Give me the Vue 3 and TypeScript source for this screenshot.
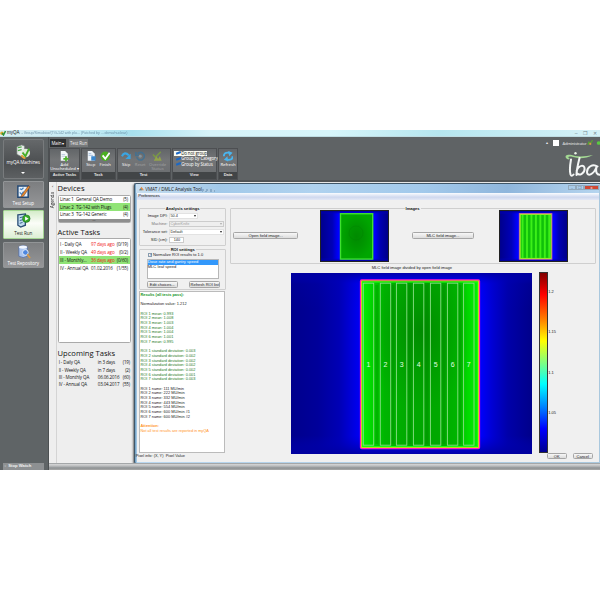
<script setup lang="ts">
interface Task { name: string; when: string; count: string; late?: boolean; active?: boolean }

const devices = [
  { name: 'Linac 1  General QA Demo', count: '(5)', active: false },
  { name: 'Linac 2  TG-142 with Plugs', count: '(4)', active: true },
  { name: 'Linac 3  TG-142 Generic', count: '(4)', active: false },
]
const activeTasks: Task[] = [
  { name: 'I - Daily QA', when: '97 days ago', count: '(0/19)', late: true },
  { name: 'II - Weekly QA', when: '49 days ago', count: '(0/2)', late: true },
  { name: 'III - Monthly...', when: '36 days ago', count: '(0/60)', late: true, active: true },
  { name: 'IV - Annual QA', when: '01.02.2016', count: '(1/55)' },
]
const upcoming: Task[] = [
  { name: 'I - Daily QA', when: 'in 3 days', count: '(19)' },
  { name: 'II - Weekly QA', when: 'in 7 days', count: '(2)' },
  { name: 'III - Monthly QA', when: '06.06.2016', count: '(60)' },
  { name: 'IV - Annual QA', when: '03.04.2017', count: '(55)' },
]
const means = ['0.993', '1.008', '1.003', '1.004', '1.004', '1.001', '0.995']
const deviations = ['0.003', '0.002', '0.002', '0.002', '0.002', '0.001', '0.003']
const names = ['111 MU/min', '222 MU/min', '332 MU/min', '443 MU/min', '554 MU/min', '600 MU/min #1', '600 MU/min #2']
const roiX = [72.3, 89.3, 105.4, 122.4, 139.4, 156.4, 172.6]
const stripes = [0, 1, 2, 3, 4, 5, 6]
const ticks = ['1.2', '1.15', '1.1', '1.05']
</script>

<template>
  <div class="page">
    <div class="shot">
      <header class="titlebar">
        <svg class="appicon" viewBox="0 0 6 6"><circle cx="2" cy="3.2" r="1.8" fill="#e0a928" /><path d="M2 3l1.5 2L5.5 1" fill="none" stroke="#2b9340" stroke-width="1.5" /></svg>
        <span class="apptitle">myQA</span>
        <span class="appghost">- Group/Simulator/(TG-142 with plu... (Patched by ... demo/nuclear)</span>
        <span class="wincontrols">–&nbsp; ❐&nbsp; ✕</span>
      </header>

      <div class="shell">
        <aside class="sidebar">
          <div class="nav machines">
            <svg viewBox="0 0 16 16"><path d="M1 3l5-2 3 1v10l-4 1-4-2z" fill="#e8edea" stroke="#7d8d82" stroke-width=".7" /><path d="M2 4l4-1M2 7l4-1" stroke="#47a743" stroke-width="1.3" /><circle cx="10.5" cy="9.5" r="4.5" fill="#dfe8d8" /><path d="M7 9l3 4 4-8" fill="none" stroke="#42ab27" stroke-width="2" /><path d="M6 12q1 3 4 3" stroke="#e7a336" stroke-width="2" fill="none" /></svg>
            <span>myQA Machines</span>
            <i class="arrow"></i>
          </div>
          <div class="nav setup">
            <svg viewBox="0 0 16 16"><path d="M2 2h11v12H2z" fill="#e8f2fb" stroke="#244974" stroke-width="1.6" /><path d="M4 5l2 1 2-2M4 9l2 2 2-3" fill="none" stroke="#397dc0" stroke-width="1.2" /><path d="M6 12l7-10 2 1-7 10-3 1z" fill="#e98a2c" stroke="#65412e" stroke-width=".6" /></svg>
            <span>Test Setup</span>
          </div>
          <div class="nav run">
            <svg viewBox="0 0 16 16"><path d="M2 2l8-1v12l-5 2-3-2z" fill="#bfdbee" stroke="#2a4d74" stroke-width="1.4" /><path d="M4 5l4-1M4 8l4-1M4 11l3-1" stroke="#335e8a" stroke-width="1" /><circle cx="11" cy="6" r="4" fill="#38ac28" stroke="#166a20" stroke-width=".6" /><path d="M9.7 3.8L13.4 6 9.7 8.2z" fill="#fff" /></svg>
            <span>Test Run</span>
          </div>
          <div class="nav repo">
            <svg viewBox="0 0 16 16"><path d="M3 3q5-3 9 0v10q-4 3-9 0z" fill="#a9c4ef" stroke="#5069a0" stroke-width=".8" /><ellipse cx="7.5" cy="3.3" rx="4.4" ry="1.7" fill="#f2f7ff" /><circle cx="10" cy="9" r="3" fill="#4d86de" stroke="#e6effa" /><path d="M12 11l3 4" stroke="#db9a43" stroke-width="1.8" /></svg>
            <span>Test Repository</span>
          </div>
          <div class="stopwatch">▫ &nbsp;Stop Watch</div>
        </aside>

        <div class="right">
          <div class="top">
            <div class="ribbon">
              <div class="tabs"><span class="tab on">Main ▾</span><span class="tab">Test Run</span></div>
              <div class="groups">
                <section class="group g1">
                  <div class="tools"><div class="tool">
                    <svg viewBox="0 0 12 12"><path d="M2 0h5l3 3v8H2z" fill="#f4f7fb" /><path d="M3 4h4M3 6h4" stroke="#9eb4cf" stroke-width=".7" /><path d="M8 6v6M5 9h6" stroke="#4fb32c" stroke-width="2" /></svg>
                    <span>Add<br>Unscheduled ▾</span></div></div>
                  <footer>Active Tasks</footer>
                </section>
                <section class="group g2">
                  <div class="tools">
                    <div class="tool"><svg viewBox="0 0 12 12"><path d="M2 0h5l3 3v8H2z" fill="#eff5fb" /><path d="M3 3h3M3 5h5" stroke="#8aabd0" stroke-width=".8" /><path d="M6 6h5v5H6z" fill="#3986cd" /></svg><span>Stop</span></div>
                    <div class="tool"><svg viewBox="0 0 12 12"><circle cx="6" cy="6" r="5.3" fill="#4caf22" /><path d="M3 5l3 4 5-7" fill="none" stroke="#fff" stroke-width="2" /></svg><span>Finish</span></div>
                  </div>
                  <footer>Task</footer>
                </section>
                <section class="group g3">
                  <div class="tools">
                    <div class="tool"><svg viewBox="0 0 12 12"><path d="M1 6Q4 0 9 5" fill="none" stroke="#3aa5e2" stroke-width="2.4" /><path d="M11 3v6H5z" fill="#3aa5e2" /></svg><span>Skip</span></div>
                    <div class="tool dim"><svg viewBox="0 0 12 12"><path d="M3 3a4.4 4.4 0 1 1-1 4M1 1v4h4" fill="none" stroke="#3d7196" stroke-width="1.8" /><circle cx="6" cy="6" r="1.7" fill="#8f9ba4" /></svg><span>Reset</span></div>
                    <div class="tool dim"><svg viewBox="0 0 12 12"><path d="M1 4l3 3 6-6" fill="none" stroke="#7ca13c" stroke-width="1.7" /><path d="M2 11l3-5 2 3 2-3 2 5z" fill="#9baf3f" /></svg><span>Override<br>Status</span></div>
                  </div>
                  <footer>Test</footer>
                </section>
                <section class="group g4">
                  <div class="viewlist">
                    <div class="sel"><i></i>Do not group</div>
                    <div><i></i>Group by Category</div>
                    <div><i></i>Group by Status</div>
                  </div>
                  <footer>View</footer>
                </section>
                <section class="group g5">
                  <div class="tools"><div class="tool"><svg viewBox="0 0 12 12"><path d="M1 6q0-5 6-4M11 6q0 5-6 4" fill="none" stroke="#49b5ef" stroke-width="2.2" /><path d="M6 0l5 2-4 4zM6 12L1 10l4-4z" fill="#49b5ef" /></svg><span>Refresh</span></div></div>
                  <footer>Data</footer>
                </section>
              </div>
            </div>
            <div class="brand">
              <div class="user"><span>▴</span><i></i><b>Administrator</b><svg viewBox="0 0 14 6"><path d="M1 5l1-3 2 1 2-3" stroke="#58a334" stroke-width="1.4" fill="none" /><circle cx="3.5" cy="4" r="1.2" fill="#d39744" /><circle cx="12.5" cy="3" r="2" fill="#5cc942" /></svg></div>
              <svg class="iba" viewBox="0 0 40 28">
                <path d="M5 7C3 3 9 3 14 5c7 1 12 0 18-1-7 3.5-14 4-20 2C7 5 6 6 9 8 7 9 6 8 5 7z" fill="#a3d893" />
                <circle cx="14.5" cy="2.2" r="1.2" fill="#e9f5e5" />
                <path d="M10 8.5C9 14 8.5 20 9.5 23.5q1 2.5 3 0M18.500 7c-1.500 6-3 12-3 17M15.600 20c2-6 8-7 8-2 0 4-5 7.500-8 4M36.500 15.500c-5-3.500-10.500 1-10.500 5.500 0 5 6.500 3 9.500-5-1 5 0 8.500 4.500 7.500" fill="none" stroke="#f4f6f5" stroke-width="2" stroke-linecap="round" />
              </svg>
            </div>
          </div>

          <div class="workspace">
            <div class="agenda"><em>‹</em><span>Agenda</span></div>
            <div class="lists">
              <h2>Devices</h2>
              <div class="box devices">
                <div v-for="d in devices" :key="d.name" class="row" :class="{ active: d.active }"><span>{{ d.name }}</span><b>{{ d.count }}</b></div>
                <div class="grip">••••</div>
              </div>
              <h2>Active Tasks</h2>
              <div class="box tasks">
                <div v-for="t in activeTasks" :key="t.name" class="row" :class="{ active: t.active }"><span>{{ t.name }}</span><span :class="{ late: t.late }">{{ t.when }}</span><b>{{ t.count }}</b></div>
              </div>
              <h2>Upcoming Tasks</h2>
              <div class="upcoming">
                <div v-for="t in upcoming" :key="t.name" class="row"><span>{{ t.name }}</span><span>{{ t.when }}</span><b>{{ t.count }}</b></div>
              </div>
            </div>

            <div class="dialog">
              <div class="dtitle"><svg viewBox="0 0 6 6"><path d="M0 5l3-4 3 4z" fill="#e28b48" /><path d="M0 5l2-2 2 2z" fill="#408ba7" /></svg><span>VMAT / DMLC Analysis Tool</span><i class="blurmark"></i><div class="dbtns"><i>–</i><i>❐</i><i class="x">x</i></div></div>
              <div class="dmenu">Preferences</div>
              <div class="dbody">
                <div class="leftcol">
                  <div class="frame analysis">
                    <strong class="legend">Analysis settings</strong>
                    <div class="field"><label>Image DPI:</label><div class="select short">50.4<i></i></div></div>
                    <div class="field off"><label>Machine:</label><div class="select">CyberKnife<i></i></div></div>
                    <div class="field"><label>Tolerance set:</label><div class="select">Default<i></i></div></div>
                    <div class="field"><label>SID (cm):</label><div class="input">140</div></div>
                  </div>
                  <div class="frame roi">
                    <strong class="legend">ROI settings</strong>
                    <div class="check"><i>✓</i>Normalize ROI results to 1.0</div>
                    <div class="listbox"><div class="picked">Dose rate and gantry speed</div><div>MLC leaf speed</div></div>
                    <div class="pair"><button>Edit choices...</button><button>Refresh ROI list</button></div>
                  </div>
                  <div class="results">
                    <p class="head">Results (all tests pass):</p><p>&nbsp;</p>
                    <p>Normalization value: 1.212</p><p>&nbsp;</p>
                    <p v-for="(m, i) in means" :key="'m' + i" class="good">ROI {{ i + 1 }} mean: {{ m }}</p><p>&nbsp;</p>
                    <p v-for="(s, i) in deviations" :key="'s' + i" class="good">ROI {{ i + 1 }} standard deviation: {{ s }}</p><p>&nbsp;</p>
                    <p v-for="(n, i) in names" :key="'n' + i">ROI {{ i + 1 }} name: {{ n }}</p><p>&nbsp;</p>
                    <p class="warn"><b>Attention:</b></p>
                    <p class="warn note">Not all test results are reported in myQA</p>
                  </div>
                  <div class="pixel">Pixel info: (X, Y)&nbsp; Pixel Value</div>
                </div>

                <div class="rightcol">
                  <div class="frame images">
                    <strong class="legend">Images</strong>
                    <button class="b1">Open field image...</button>
                    <svg class="thumb t1" viewBox="0 0 67 50" preserveAspectRatio="none">
                      <defs>
                        <linearGradient id="blueSmall"><stop offset="0" stop-color="#00008c" /><stop offset=".17" stop-color="#0000b8" /><stop offset=".26" stop-color="#0000ff" /><stop offset=".8" stop-color="#0000ff" /><stop offset=".88" stop-color="#0000b4" /><stop offset="1" stop-color="#000088" /></linearGradient>
                        <linearGradient id="topSmall" x2="0" y2="1"><stop offset="0" stop-color="#000090" /><stop offset=".07" stop-color="#0000d0" stop-opacity="0" /><stop offset=".94" stop-color="#0000d0" stop-opacity="0" /><stop offset="1" stop-color="#000090" /></linearGradient>
                        <radialGradient id="greenSmall"><stop offset="0" stop-color="#008a00" /><stop offset=".5" stop-color="#009600" /><stop offset="1" stop-color="#00a600" /></radialGradient>
                      </defs>
                      <rect width="67" height="50" fill="url(#blueSmall)" /><rect width="67" height="50" fill="url(#topSmall)" />
                      <rect x="19.5" y="2.7" width="32.2" height="45.4" fill="url(#greenSmall)" stroke="#3fe030" stroke-width="1.4" />
                      <circle cx="35" cy="22" r="7" fill="none" stroke="#007d00" stroke-width=".7" opacity=".5" />
                    </svg>
                    <button class="b2">MLC field image...</button>
                    <svg class="thumb t2" viewBox="0 0 67 50" preserveAspectRatio="none">
                      <rect width="67" height="50" fill="url(#blueSmall)" /><rect width="67" height="50" fill="url(#topSmall)" />
                      <rect x="19.5" y="2.7" width="32.2" height="45.4" fill="#10c00a" stroke="#c264a0" stroke-width="1.3" />
                      <rect x="20.2" y="3.4" width="30.8" height="44" fill="none" stroke="#a5ee2a" stroke-width="1" />
                      <rect v-for="s in stripes" :key="s" :x="21.6 + s * 4.45" y="4" width="1.9" height="43" fill="#3cf018" />
                    </svg>
                  </div>
                  <div class="caption">MLC field image divided by open field image</div>
                  <div class="plot">
                    <svg class="main" viewBox="0 0 241 181">
                      <defs>
                        <linearGradient id="blueMain"><stop offset="0" stop-color="#00008c" /><stop offset=".11" stop-color="#00009a" /><stop offset=".2" stop-color="#0000b5" /><stop offset=".27" stop-color="#0000e8" /><stop offset=".3" stop-color="#0000ff" /><stop offset=".78" stop-color="#0000ff" /><stop offset=".84" stop-color="#0000d0" /><stop offset=".9" stop-color="#0000a9" /><stop offset="1" stop-color="#00008a" /></linearGradient>
                        <linearGradient id="fadeMain" x2="0" y2="1"><stop offset="0" stop-color="#0000a0" stop-opacity=".9" /><stop offset=".06" stop-color="#0000c0" stop-opacity=".15" /><stop offset=".2" stop-color="#0000c0" stop-opacity="0" /><stop offset=".9" stop-color="#0000c0" stop-opacity="0" /><stop offset="1" stop-color="#0000a0" stop-opacity=".9" /></linearGradient>
                        <linearGradient id="greenMain"><stop offset="0" stop-color="#00f500" /><stop offset=".1" stop-color="#00d400" /><stop offset=".2" stop-color="#00b500" /><stop offset=".42" stop-color="#00a800" /><stop offset=".65" stop-color="#00a800" /><stop offset=".82" stop-color="#00b500" /><stop offset=".9" stop-color="#00d900" /><stop offset="1" stop-color="#00f600" /></linearGradient>
                        <radialGradient id="shade" cx=".5" cy=".3" r=".48"><stop offset="0" stop-color="#007800" stop-opacity=".6" /><stop offset="1" stop-color="#009000" stop-opacity="0" /></radialGradient>
                        <filter id="soft"><feGaussianBlur stdDeviation=".35" /></filter>
                      </defs>
                      <rect width="241" height="181" fill="url(#blueMain)" /><rect width="241" height="181" fill="url(#fadeMain)" />
                      <g filter="url(#soft)">
                        <rect x="69.6" y="7" width="118.8" height="168.6" rx="1" fill="url(#greenMain)" stroke="#ff18c5" stroke-width="1.5" />
                        <rect x="70.7" y="8.1" width="116.6" height="166.4" fill="url(#shade)" stroke="#f0d816" stroke-width="1" />
                        <rect x="71.6" y="9" width="114.8" height="164.6" fill="none" stroke="#12f812" stroke-width="1.2" />
                        <rect v-for="s in 6" :key="s" :x="roiX[s] - 5" y="12" width="3" height="159" fill="#008500" opacity=".3" />
                      </g>
                      <g v-for="(x, i) in roiX" :key="i">
                        <rect :x="x" y="10.2" width="10.4" height="162" fill="none" stroke="#8bdd86" stroke-width=".9" />
                        <text :x="x + 5.2" y="93.6" text-anchor="middle">{{ i + 1 }}</text>
                      </g>
                    </svg>
                    <div class="scale"></div>
                    <div class="ticks"><span v-for="t in ticks" :key="t">{{ t }}</span></div>
                  </div>
                  <div class="actions"><button>OK</button><button>Cancel</button></div>
                </div>
              </div>
            </div>
          </div>
          <div class="footerbar"></div>
        </div>
      </div>
    </div>
  </div>
</template>

<style>
body { margin: 0; background: #fff; overflow: hidden; }
</style>

<style scoped>
* { box-sizing: border-box; }
.page { width: 600px; height: 600px; padding-top: 130px; background: #fff; font: 4px/1.2 "Liberation Sans", Arial, sans-serif; color: #222; overflow: hidden; }
.shot { width: 600px; height: 339.5px; display: flex; flex-direction: column; overflow: hidden; background: #5f6365; white-space: nowrap; }
h2, p { margin: 0; }
i, em { font-style: normal; }
svg { display: block; flex: none; }
button { padding: 0; margin: 0; font: inherit; color: #222; height: 7px; border: .8px solid #a6a6a6; border-radius: 1.5px; background: linear-gradient(#f8f8f8, #dcdcdc); line-height: 5px; }

.titlebar { height: 7px; flex: none; display: flex; align-items: center; background: linear-gradient(90deg, #d8edf3 0, #c5ecf5 14%, #a8e0ee 22%, #d7f3f9 35%, #d7f5fa 55%, #b6e6ef 73%, #d5f1f7 100%); border-bottom: 1px solid #bfdde3; }
.appicon { width: 6px; height: 6px; }
.apptitle { font-size: 4.5px; margin: 0 2px 0 1px; }
.appghost { font-size: 3.7px; color: #6488a0; letter-spacing: -.06px; filter: blur(.3px); opacity: .85; }
.wincontrols { margin-left: auto; font-size: 5px; color: #71858c; margin-right: 2px; letter-spacing: 1px; }
.shell { display: flex; flex: 1; min-height: 0; }

.sidebar { width: 49px; flex: none; display: flex; flex-direction: column; padding: 2px 4px 0 2.5px; gap: 2.5px; background: #5f6466; border-right: 1px solid #4c5052; }
.nav { display: flex; flex-direction: column; align-items: center; border: .8px solid #929597; border-radius: 1px; background: linear-gradient(#7c7e80, #959698); color: #fff; font: 4.6px/6px "Open Sans", sans-serif; height: 26.5px; }
.nav svg { width: 15px; height: 15px; margin-top: 1.5px; }
.nav span { letter-spacing: -.1px; margin-top: 1.2px; }
.nav.machines { height: 39.5px; background: linear-gradient(#65686a, #4c4f51 60%, #5d6062); border-color: #787b7d; border-radius: 2px; }
.nav.machines svg { margin-top: 3.5px; }
.nav.machines span { margin-top: 0; }
.arrow { border: 2px solid transparent; border-top: 2.5px solid #fff; border-bottom: 0; margin-top: 7px; }
.nav.run { height: 29px; background: linear-gradient(#d4ecc9, #fbfdf8 45%, #ddefd5); border: 1px solid #a4d594; color: #222; }
.nav.run span { margin-top: 2px; }
.stopwatch { margin-top: auto; height: 6.5px; font-size: 4.2px; line-height: 6px; color: #f1f1f1; background: #8d9092; padding-left: 2px; font-weight: bold; }

.right { flex: 1; min-width: 0; display: flex; flex-direction: column; }
.top { height: 45px; flex: none; display: flex; justify-content: space-between; border-bottom: 2px solid #505355; }
.tabs { display: flex; height: 11px; padding-top: 2px; gap: 2.5px; }
.tab { height: 8px; width: 19px; padding: 1px 0 0 1.5px; color: #eee; background: #77797b; font: 4.4px/6px "Open Sans", sans-serif; letter-spacing: -.1px; }
.tab.on { background: #2e3031; width: 16px; margin-left: 1px; color: #fff; }
.groups { display: flex; gap: 1px; }
.group { height: 31.5px; display: flex; flex-direction: column; background: linear-gradient(#626568, #737577 35%, #696c6f); border: .5px solid #4d4f52; }
.g1 { width: 31px; } .g2 { width: 34.5px; } .g3 { width: 54px; } .g4 { width: 45.5px; } .g5 { width: 20px; }
.group footer { margin-top: auto; height: 6.5px; text-align: center; background: #424547; color: #e2e2e2; font: bold 4px/6px "Liberation Sans", sans-serif; letter-spacing: -.05px; }
.tools { display: flex; justify-content: space-evenly; padding-top: 2px; }
.tool { display: flex; flex-direction: column; align-items: center; text-align: center; color: #fff; font: 4.2px/4.3px "Open Sans", sans-serif; }
.tool svg { width: 10.5px; height: 10.5px; }
.tool span { margin-top: 1px; }
.tool.dim { color: #a0a2a3; }
.dim svg { opacity: .8; }
.viewlist { padding: 1.5px 1px 0; color: #fff; font: 4.4px/5px "Open Sans", sans-serif; letter-spacing: -.1px; }
.viewlist div { height: 5.6px; padding-left: 2px; display: flex; align-items: center; }
.viewlist i { flex: none; width: 4.5px; height: 2px; background: #1b68c5; transform: rotate(-20deg); margin-right: 1.2px; }
.viewlist .sel { background: #fafbf2; color: #222; width: 33px; }
.brand { width: 56px; display: flex; flex-direction: column; padding-top: 1.5px; }
.user { display: flex; align-items: center; color: #eee; height: 9px; }
.user span { width: 7px; padding-left: 2px; font-size: 4px; }
.user i { flex: none; width: 6.5px; height: 6.5px; background: #fff; margin: 0 3.5px 0 3px; }
.user b { font: 4.1px "Open Sans", sans-serif; letter-spacing: -.18px; width: 24.5px; flex: none; }
.user svg { width: 13px; height: 6px; }
.iba { width: 40px; height: 28px; margin: 3px 0 0 17px; }

.workspace { flex: 1; min-height: 0; display: flex; background: #eee; }
.agenda { width: 7.5px; padding: 2px 0 0 1px; border-right: .5px solid #d4d4d4; font-size: 4px; display: flex; flex-direction: column; align-items: center; }
.agenda span { writing-mode: vertical-rl; transform: rotate(180deg); margin-top: 3px; font: 4.8px/5px "Open Sans", sans-serif; letter-spacing: -.1px; }
.agenda em { line-height: 5px; }
.lists { width: 77px; padding: 0 3px 0 1px; flex: none; }
.lists h2 { font: 7.6px/9px "Open Sans", sans-serif; height: 9px; color: #111; }
.lists h2:first-child { margin-top: 2px; }
.box { background: #fff; border: .8px solid #aaa; border-radius: 1.5px; }
.devices { margin-top: 1.5px; height: 28px; display: flex; flex-direction: column; overflow: hidden; }
.row { display: flex; align-items: center; height: 8px; padding: 0 1.5px; font: 4.5px/5px "Open Sans", sans-serif; letter-spacing: -.12px; color: #111; white-space: pre; }
.row b { margin-left: auto; font-weight: 400; }
.row.active { background: #91e477; }
.grip { height: 3px; margin-top: auto; background: #8e8e8e; color: #333; font-size: 2px; line-height: 3px; text-align: center; }
.devices + h2 { margin-top: 5.2px; }
.tasks { margin-top: 1px; height: 105px; padding-top: 1.8px; }
.tasks + h2 { margin-top: 6px; }
.tasks .row { height: 7.9px; }
.tasks .row span:first-child { width: 31px; }
.row .late { color: #f01818; }
.upcoming { margin-top: 1.5px; }
.upcoming .row { height: 7.3px; padding: 0 .5px 0 1.2px; }
.upcoming .row span:first-child { width: 39px; }

.dialog { flex: 1; min-width: 0; display: flex; flex-direction: column; height: 281px; margin-top: 1px; padding: 0 1px 1.5px 2.2px; background: linear-gradient(90deg, #6899bd, #b9d7f0 2.2px, #a9c8de); border: 1px solid #3f5668; border-right: 0; border-radius: 2px 0 0 2px; box-shadow: -1px 1px 2px #777; }
.dtitle { height: 9px; flex: none; display: flex; align-items: center; margin-left: -1px; padding-left: 3px; font: 4.7px/6px "Open Sans", sans-serif; background: linear-gradient(105deg, #c9dff0 0, #a2c9e9 18%, #afd2ef 38%, #a2c9eb 62%, #8fb6dc 80%, #b6d5ef 100%); }
.dtitle svg { width: 5px; height: 5px; margin-right: 1.5px; }
.dtitle span { letter-spacing: -.1px; }
.blurmark { width: 13px; height: 3px; background: repeating-linear-gradient(110deg, #7497b7 0 2px, #b4cde2 2px 4px); filter: blur(.6px); margin-top: 4px; opacity: .6; }
.dbtns { margin-left: auto; display: flex; height: 5px; margin-bottom: 3px; color: #56738d; }
.dbtns i { width: 8px; border: .5px solid #93a9bc; font-size: 4px; line-height: 4px; text-align: center; }
.dbtns .x { width: 15px; background: #cf4835; color: #fff; }
.dmenu { height: 7px; flex: none; background: linear-gradient(#fafcff, #cfd8ee 60%, #e3e8f5); padding-left: 1.5px; font: 4.2px/6.5px "Liberation Sans", sans-serif; letter-spacing: -.1px; color: #111; }
.dbody { flex: 1; min-height: 0; display: flex; gap: 3.5px; padding: 8px 3.5px 0 2.5px; background: #f0f0f0; }
.leftcol { width: 87px; flex: none; display: flex; flex-direction: column; }
.frame { border: .8px solid #cfcfcf; border-radius: 1px; position: relative; }
.legend { position: absolute; top: -3px; left: 50%; transform: translateX(-50%); background: #f0f0f0; padding: 0 1px; font-size: 4.1px; line-height: 5px; color: #111; }
.analysis { height: 37.5px; padding: 3.1px 1.5px 0; }
.field { display: flex; align-items: center; height: 8px; }
.field label { width: 26px; text-align: right; margin-right: 1px; }
.select { width: 55px; height: 6px; background: #fff; border: .5px solid #e2e2e2; padding-left: .8px; line-height: 5px; display: flex; justify-content: space-between; align-items: center; font-size: 3.8px; }
.select.short { width: 29.5px; }
.select i { border: 1.4px solid transparent; border-top: 2px solid #222; border-bottom: 0; margin-right: 1.2px; }
.off { color: #777; }
.off .select { background: #eee; color: #a2a2a2; border-color: #ccc; }
.off .select i { border-top-color: #aaa; }
.input { width: 15px; height: 6px; border: .5px solid #ccc; background: #fff; font-size: 3.8px; line-height: 5px; padding-left: 4px; }
.roi { margin-top: 3.4px; height: 41px; padding: 2px 6px 0 6.5px; }
.check { display: flex; align-items: center; height: 6.5px; font-size: 4px; }
.check i { width: 4px; height: 4px; border: .5px solid #879db0; background: #fff; margin: 0 1.2px 0 1px; font-size: 3.5px; line-height: 3px; color: #25468b; }
.listbox { height: 20.5px; border: .6px solid #b7b7b7; background: #fff; font-size: 4.1px; line-height: 4.8px; margin-top: .5px; }
.picked { background: #3298fb; color: #fff; }
.pair { display: flex; justify-content: space-between; margin: 2px -1px 0 0; }
.pair button { width: 31px; height: 6.5px; font-size: 4px; }
.results { height: 162px; margin: 1.6px 1px 0 0; padding-top: .5px; border: .6px solid #bbb; background: #fff; font-size: 3.9px; overflow: hidden; padding-left: .3px; }
.results p { height: 4.7px; line-height: 4.7px; }
.results .head { color: #159526; font-weight: bold; }
.good { color: #1d7b27; }
.warn { color: #ff931f; }
.note { font-size: 3.85px; }
.pixel { margin: .8px 0 0 -3.5px; font-size: 3.9px; line-height: 4px; }

.rightcol { flex: 1; min-width: 0; display: flex; flex-direction: column; }
.images { height: 56px; flex: none; display: flex; align-items: center; padding: 0 0 1px 2.5px; }
.b1 { width: 65px; } .b2 { width: 61.5px; }
.b1, .b2 { font-size: 4.1px; }
.thumb { width: 67px; height: 50px; outline: .5px solid #222; }
.t1 { margin-left: 22.5px; margin-right: 24.5px; }
.t2 { margin-left: 26px; }
.caption { height: 9px; flex: none; text-align: center; font-size: 4.1px; line-height: 8px; padding-right: 1.5px; }
.plot { height: 181px; flex: none; display: flex; padding-left: 61.5px; }
.main { width: 241px; height: 181px; }
.main text { fill: #e0ffe0; font: 7px "Liberation Sans", sans-serif; }
.scale { width: 8.7px; height: 181px; margin: -1px 0 0 6.7px; border: .5px solid #333; background: linear-gradient(#800000, #f00 12%, #ff8000 26%, #ff0 38%, #80ff80 50%, #0ff 62%, #0080ff 75%, #00f 87%, #00008f); }
.ticks { padding: 16.2px 0 0 .6px; font-size: 4px; }
.ticks span { display: block; height: 40.3px; line-height: 5px; }
.actions { display: flex; gap: 5.5px; padding: 0 2.5px 0 0; justify-content: flex-end; margin-top: -1.5px; }
.actions button { width: 20.5px; height: 6.5px; font-size: 4px; }
.footerbar { height: 6.5px; flex: none; background: linear-gradient(#727779 0, #d6d7d8 1px, #bbbdbe 3px, #8d9193 5px, #aaa); }
</style>
